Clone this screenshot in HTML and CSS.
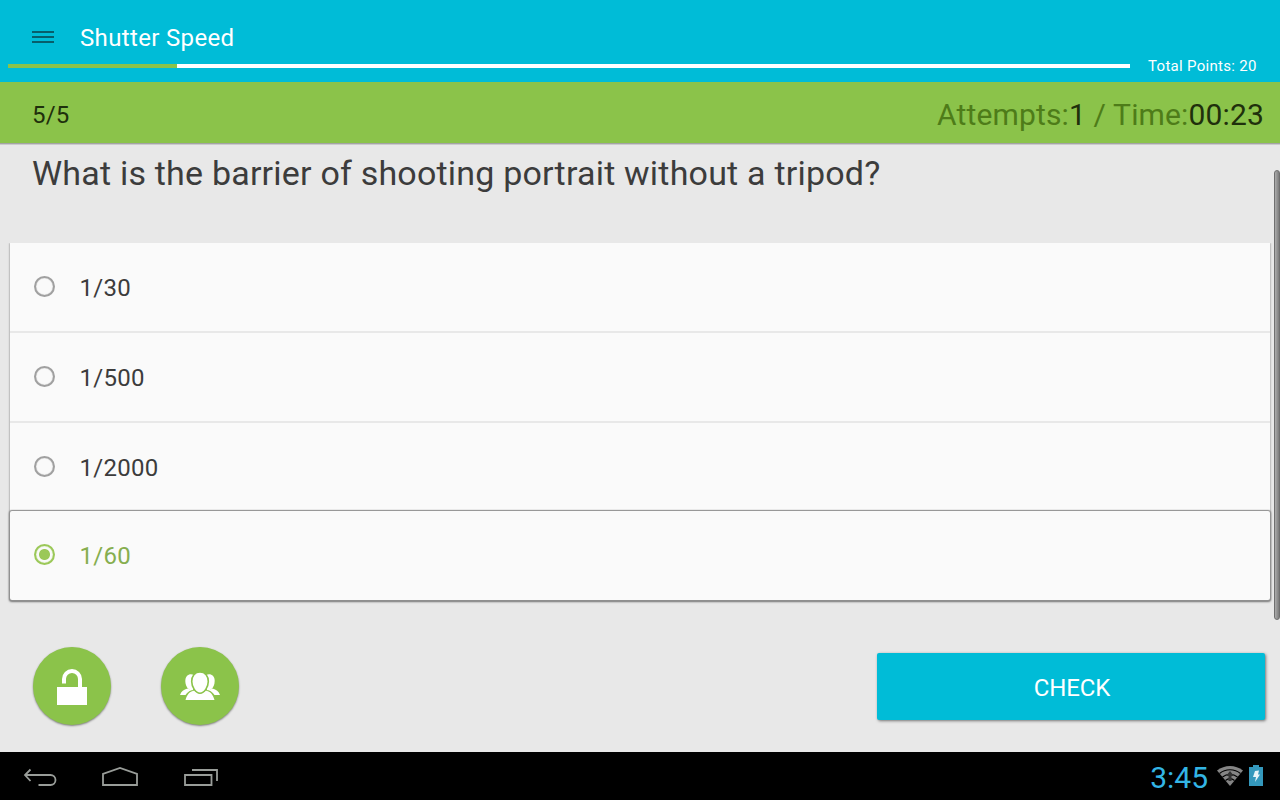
FILE: index.html
```html
<!DOCTYPE html>
<html lang="en">
<head>
  <meta charset="UTF-8">
  <meta name="viewport" content="width=device-width, initial-scale=1.0">
  <title>Shutter Speed</title>
  <link rel="stylesheet" href="styles.css">
</head>
<body>
  <header class="header">
    <div class="title-row">
      <div class="menu"><span></span><span></span><span></span></div>
      <h1 class="title">Shutter Speed</h1>
    </div>
    <div class="progress-row">
      <div class="progress"><div class="progress-fill" style="width: 15.06%"></div></div>
      <div class="points">Total Points: 20</div>
    </div>
  </header>

  <div class="status">
    <div class="count">5/5</div>
    <div class="stats">Attempts:<b>1</b> / Time:<b>00:23</b></div>
  </div>

  <main class="quiz">
    <h2 class="question">What is the barrier of shooting portrait without a tripod?</h2>
    <div class="options">
      <div class="option"><span class="radio"></span><span class="label">1/30</span></div>
      <div class="option"><span class="radio"></span><span class="label">1/500</span></div>
      <div class="option"><span class="radio"></span><span class="label">1/2000</span></div>
      <div class="option selected"><span class="radio"></span><span class="label">1/60</span></div>
    </div>
    <div class="actions">
      <div class="round">
        <svg width="78" height="78" viewBox="0 0 78 78">
          <path d="M31 36.5V32a8 8 0 0 1 16 0v10" fill="none" stroke="#fff" stroke-width="4"/>
          <path d="M24 40h30v18H24z" fill="#fff"/>
        </svg>
      </div>
      <div class="round">
        <svg width="78" height="78" viewBox="0 0 78 78">
          <g fill="#fff">
            <path d="M33 28c-4.500-2-8.700.500-8.700 6 0 3.500 1.400 6.500 3.400 8.200 1.300 1 2.600 1.200 4.300.8z"/>
            <path d="M45 28c4.500-2 8.700.500 8.700 6 0 3.500-1.400 6.500-3.400 8.200-1.300 1-2.600 1.200-4.300.8z"/>
            <path d="M19 48c1.200-3.800 3.800-5.500 7.500-6.500l4 1.800c-2.800 1-4.500 2.600-6 4.700z"/>
            <path d="M59 48c-1.200-3.800-3.800-5.500-7.500-6.500l-4 1.800c2.800 1 4.500 2.600 6 4.700z"/>
            <path d="M24.500 53c1.500-6 4.500-8.800 9-9.600 3.500 3.500 7.500 3.500 11 0 4.500.8 7.500 3.600 9 9.600z"/>
          </g>
          <path d="M39 24.900c5.300 0 8.300 4.200 8.300 9.600 0 4.700-3.600 11.700-8.300 11.700s-8.300-7-8.300-11.700c0-5.400 3-9.600 8.300-9.600z" fill="#fff" stroke="#8bc34a" stroke-width="1.600"/>
        </svg>
      </div>
      <div class="check">CHECK</div>
    </div>
    <div class="scrollbar"></div>
  </main>

  <footer class="navbar">
    <svg class="nav-icons" width="240" height="48" viewBox="0 0 240 48" fill="none" stroke="#999d99" stroke-width="1.800">
      <path d="M30.500 17.500L25 23l5.500 6M25 23h25.500a5 5 0 0 1 0 10H38.500"/>
      <path d="M103 33V22l17-6 17 6v11z"/>
      <path d="M185 23h26.500v10H185zM192 18h25v11"/>
    </svg>
    <div class="clock">3:45</div>
    <svg class="wifi" width="26" height="20" viewBox="0 0 26 20">
      <path d="M13 20L0 4.500C7.500-1.500 18.500-1.500 26 4.500z" fill="#858585"/>
      <path d="M2.500 7.500c6-5 15-5 21 0M5.500 11c4.500-3.700 10.500-3.700 15 0M8.500 14.500c2.700-2.200 6.300-2.200 9 0" fill="none" stroke="#000" stroke-width="1.100"/>
      <path d="M13 5l4 5h-2.500v5h-3v-5H9z" fill="#333"/>
    </svg>
    <svg class="battery" width="14" height="21" viewBox="0 0 14 21">
      <path d="M0 2h4V0h6v2h4v19H0z" fill="#3498bc"/>
      <path d="M6 6l4-.500-1 4h2L6 17l1-5H4z" fill="#e8f4f8"/>
    </svg>
  </footer>
</body>
</html>
```
FILE: styles.css
```css
* {
  box-sizing: border-box;
}
body {
  margin: 0;
  height: 800px;
  display: flex;
  flex-direction: column;
  overflow: hidden;
  font-family: Roboto, sans-serif;
  background-color: #e8e8e8;
  color: #3c3c3c;
}
h1, h2 {
  margin: 0;
  font-weight: 400;
}

/* top bar */
.header {
  height: 82px;
  background-color: #00bcd7;
  color: #fff;
}
.title-row {
  display: flex;
  align-items: center;
  height: 58px;
  padding: 17px 0 0 32px;
}
.menu {
  display: flex;
  flex-direction: column;
  gap: 3px;
  width: 22px;
  margin: 0 26px 2px 0;
}
.menu span {
  height: 2px;
  background-color: #075e6b;
}
.title {
  font-size: 24px;
  line-height: 28px;
  letter-spacing: 0.35px;
}
.progress-row {
  display: flex;
  align-items: center;
  height: 16px;
  padding-left: 8px;
}
.progress {
  width: 1122px;
  height: 4px;
  margin-right: 18px;
  background-color: #fff;
}
.progress-fill {
  height: 4px;
  background-color: #8bc34a;
}
.points {
  font-size: 15px;
  letter-spacing: 0.3px;
  white-space: nowrap;
}

.status {
  display: flex;
  align-items: center;
  justify-content: space-between;
  height: 61px;
  padding: 4px 16px 0 32px;
  background-color: #8bc34a;
  box-shadow: 0 1px 0 #a3a3a3, 0 2px 0 #cacaca;
}
.count {
  font-size: 24px;
  letter-spacing: 0.2px;
  color: #1f300c;
}
.stats {
  font-size: 30px;
  letter-spacing: 0.15px;
  color: #4e7c19;
}
.stats b {
  font-weight: 400;
  color: #1f300c;
}

/* question and answers */
.quiz {
  position: relative;
  height: 609px;
  padding: 10px 10px 0 10px;
}
.question {
  height: 90px;
  padding-left: 22px;
  font-size: 34px;
  line-height: 40px;
  letter-spacing: 0.2px;
}
.options {
  width: 1260px;
  box-shadow: 0 0 2px rgba(0, 0, 0, 0.5);
  clip-path: inset(0 -3px -4px -3px);
}
.option {
  display: flex;
  align-items: center;
  height: 90px;
  padding-left: 24px;
  background-color: #fafafa;
  border-bottom: 2px solid #e8e8e8;
}
.option:nth-child(3) {
  height: 88px;
  border-bottom: none;
}
.option.selected {
  position: relative;
  height: 89px;
  border-bottom: none;
  border-radius: 2px;
  color: #86ae4f;
  box-shadow: 0 0 1px 1px #929292, 0 1px 2px 1px #777;
}
.radio {
  width: 21px;
  height: 21px;
  margin: 0 24.500px 1px 0;
  border: 2px solid #a0a0a0;
  border-radius: 50%;
  box-shadow: inset 0 0 1px #a0a0a0;
}
.selected .radio {
  margin-bottom: 2px;
  border-color: #9bc858;
  background: radial-gradient(circle, #9bc858 5px, transparent 6px);
  box-shadow: inset 0 0 1px #9bc858;
}
.label {
  padding-top: 1px;
  font-size: 24px;
  letter-spacing: 0.3px;
}
.selected .label {
  padding-top: 0;
}

.actions {
  display: flex;
  margin-top: 47px;
  padding-left: 23px;
}
.round {
  width: 78px;
  height: 78px;
  margin-right: 50px;
  border-radius: 50%;
  background-color: #8bc34a;
  box-shadow: 0 1px 2px rgba(0, 0, 0, 0.45);
}
.round svg {
  display: block;
}
.check {
  width: 388px;
  height: 67px;
  margin: 6px 5px 0 auto;
  padding-left: 2px;
  border-radius: 2px;
  background-color: #00bcd7;
  color: #fff;
  font-size: 24px;
  line-height: 70px;
  letter-spacing: -0.1px;
  text-align: center;
  box-shadow: 1px 1px 3px rgba(0, 0, 0, 0.5);
}
.scrollbar {
  position: absolute;
  top: 27px;
  right: 0;
  width: 6px;
  height: 450px;
  border: 1px solid #6f6f6f;
  border-radius: 3px;
  background: linear-gradient(to right, #acacac, #7c7c7c);
}

/* system bar */
.navbar {
  display: flex;
  align-items: center;
  height: 48px;
  background-color: #000;
}
.clock {
  margin: 4px 9px 0 auto;
  font-size: 30px;
  line-height: 36px;
  color: #33b5e5;
}
.wifi {
  margin-right: 6px;
}
.battery {
  margin: 0 17px 1px 0;
}
```
